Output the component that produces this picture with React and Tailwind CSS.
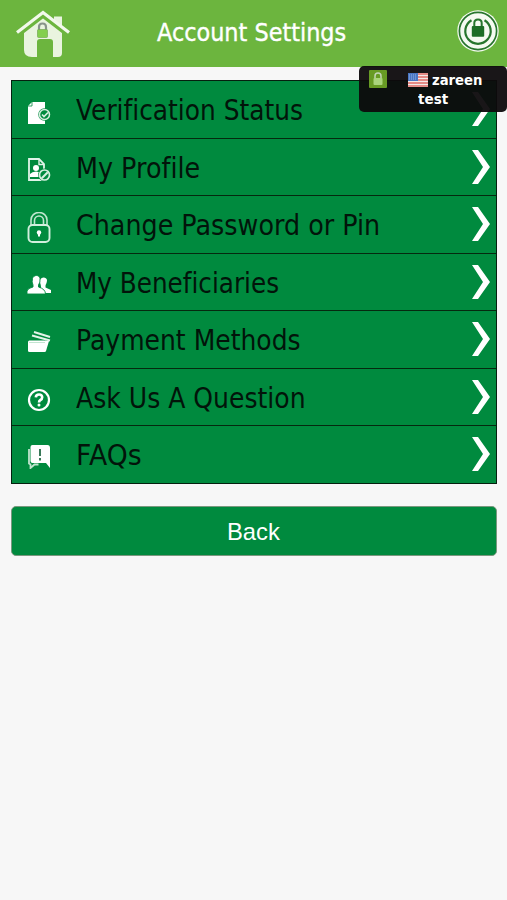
import React from "react";

function HomeIcon() {
  return (
    <svg viewBox="0 0 56 48" className="h-12 w-14 shrink-0">
      <path d="M39 14V6.500h8V20z" fill="#e9f4df" />
      <path d="M9 22 28 7l19 15v21q0 4-4 4h-5V32q0-3-3-3H25q-3 0-3 3v15h-5q-8 0-8-7z" fill="#e9f4df" />
      <path d="M2 26 28 6l26 20" fill="none" stroke="#6cb53e" strokeWidth="4" />
      <path d="M2 22.500 28 2.500l26 20" fill="none" stroke="#f2f9eb" strokeWidth="3.200" />
      <path d="M24 21v-4q0-3.500 3.500-3.500T31 17v4" fill="none" stroke="#88938a" strokeWidth="2.200" />
      <rect x="22.500" y="19.500" width="10" height="8" rx="1" fill="#83cf4d" stroke="#76a954" strokeWidth=".7" />
    </svg>
  );
}

function LockPowerIcon() {
  return (
    <svg viewBox="0 0 42 42" className="h-[42px] w-[42px] shrink-0">
      <circle cx="21" cy="21" r="20.700" fill="#f5faf1" />
      <circle cx="21" cy="21" r="18.600" fill="none" stroke="#27752d" strokeWidth="1.700" />
      <path d="M14.500 10.200a12.700 12.700 0 1 0 13 0" fill="none" stroke="#27752d" strokeWidth="2.200" />
      <path d="M17.300 18v-5q0-3.500 3.700-3.500t3.700 3.500v5" fill="none" stroke="#27752d" strokeWidth="2" />
      <rect x="14.800" y="16" width="12.400" height="10.800" rx="1" fill="#1d6d26" />
    </svg>
  );
}

const icons = {
  verify: (
    <>
      <path d="M5 2h13v22H1V6z" fill="white" />
      <path d="M1 6h4V2" fill="none" stroke="#008a3e" strokeWidth=".8" />
      <circle cx="17.500" cy="14.500" r="6.200" fill="#008a3e" />
      <circle cx="17.500" cy="14.500" r="5" fill="none" stroke="#d6eee0" strokeWidth="1.500" />
      <path d="m15 14.500 2 2 4-4" fill="none" stroke="#d6eee0" strokeWidth="1.700" />
    </>
  ),
  profile: (
    <>
      <path d="M2 2h10l5 5v16H2z" fill="none" stroke="#e0f4e8" strokeWidth="1.800" />
      <path d="M12 2v5.500h5" fill="none" stroke="#e0f4e8" strokeWidth="1.400" />
      <circle cx="9" cy="11" r="3" fill="white" />
      <path d="M3 20v-3q2-2.500 6-2.500t6 2.500v3z" fill="white" />
      <circle cx="17.500" cy="18" r="6.400" fill="#008a3e" />
      <circle cx="17.500" cy="18" r="5" fill="none" stroke="#d5efdf" strokeWidth="1.700" />
      <path d="m14 20.500 6-6 1.500 1.500-6 6z" fill="#d5efdf" />
    </>
  ),
  lock: (
    <>
      <path d="M4 13V8a8 7.500 0 0 1 16 0v5M7.500 13V8.500a4.500 4.500 0 0 1 9 0V13" fill="none" stroke="#bfe6cf" strokeWidth="1.600" />
      <rect x="1.500" y="13" width="21" height="17" rx="4" fill="none" stroke="#d2efdd" strokeWidth="1.900" />
      <circle cx="12" cy="20.500" r="2.200" fill="white" />
      <path d="M12 20v4.500" stroke="white" strokeWidth="2" />
    </>
  ),
  people: (
    <>
      <path d="M14 13c0-3-1.500-4-1-7 1-3.500 6.500-3.500 7 0 0 3-1 3.500-1.500 5.500v2L24 16v3H14z" fill="white" />
      <path d="M0 20v-3q1-3 6-4v-2Q4.500 8 5.500 4.500c1-4 7-4 7.500 0q.5 4-1.500 6.500v2q7 2 7 7z" fill="white" stroke="#008a3e" strokeWidth=".9" />
    </>
  ),
  cards: (
    <>
      <path d="m7 1 16 5M5 4.500l18 5" fill="none" stroke="#e3f4e9" strokeWidth="1.900" />
      <path d="m18 9.500 4 .5-3 10" fill="white" />
      <rect x="1" y="9.500" width="18" height="11.500" rx="1.500" fill="white" />
      <path d="M2 11.500h16" stroke="#b4dec5" strokeWidth=".8" />
    </>
  ),
  question: (
    <>
      <circle cx="12" cy="12" r="10" fill="none" stroke="white" strokeWidth="2.200" />
      <path d="M8.800 9.300q.2-2.800 3.200-2.800t3.200 2.700q0 1.800-1.800 2.800-1.400.8-1.400 2.500" fill="none" stroke="white" strokeWidth="2.600" />
      <circle cx="12" cy="17" r="1.500" fill="white" />
    </>
  ),
  faq: (
    <>
      <path d="M2 4v14.500l1.500 1V23l4-3.500h4" fill="none" stroke="#c0e4ce" strokeWidth="1.800" />
      <path d="M5.500 0H20.500q2.500 0 2.500 3v20l-4-5H5.500q-2 0-2-2V2q0-2 2-2z" fill="white" />
      <path d="M13 4v7M13 13v2.500" stroke="#397958" strokeWidth="2" />
    </>
  ),
};

const rows = [
  { icon: "verify", box: "0 0 24 25", size: "h-[25px]", label: "Verification Status", width: 227 },
  { icon: "profile", box: "0 0 24 25", size: "h-[25px]", label: "My Profile", width: 124 },
  { icon: "lock", box: "0 0 24 31", size: "h-[31px]", label: "Change Password or Pin", width: 304 },
  { icon: "people", box: "0 0 24 21", size: "h-[21px]", label: "My Beneficiaries", width: 203 },
  { icon: "cards", box: "0 0 24 22", size: "h-[22px]", label: "Payment Methods", width: 225 },
  { icon: "question", box: "0 0 24 24", size: "h-6", label: "Ask Us A Question", width: 230 },
  { icon: "faq", box: "0 0 24 24", size: "h-6", label: "FAQs", width: 66 },
];

// Scales a single-line label horizontally to its allotted width.
function FitText({ width, children, className }) {
  const ref = React.useRef(null);
  const [scale, setScale] = React.useState(1);
  React.useLayoutEffect(() => {
    const fit = () => setScale(width / ref.current.offsetWidth);
    fit();
    document.fonts.ready.then(fit);
  }, [width]);
  return (
    <span ref={ref} className={"inline-block origin-left whitespace-nowrap " + className} style={{ transform: `scaleX(${scale})` }}>
      {children}
    </span>
  );
}

function UsFlag() {
  return (
    <svg viewBox="0 0 20 14" className="h-[14px] w-5 shrink-0">
      <rect width="20" height="14" fill="#f4e9e8" />
      <path d="M0 1h20M0 4h20M0 7h20M0 10h20M0 13h20" stroke="#df6c66" strokeWidth="1.400" />
      <rect width="10" height="8" fill="#4976c4" />
      <path d="M1 2h8M1 4h8M1 6h8" stroke="#a8c2ec" strokeWidth=".8" strokeDasharray="1 1" />
    </svg>
  );
}

export default function App() {
  return (
    <div className="relative h-[900px] w-[507px] overflow-hidden bg-[#f7f7f7] font-['DejaVu_Sans',sans-serif] [font-variant-ligatures:none]">
      <header className="flex h-[67px] items-start justify-between bg-[#6cb53e] pl-[15px] pr-2 pt-[10px]">
        <HomeIcon />
        <h1 className="ml-[86px] w-[189px] text-[24.5px] leading-[46px] text-white">
          <FitText width={189} className="[-webkit-text-stroke:0.4px_#ffffff]">Account Settings</FitText>
        </h1>
        <div className="ml-auto">
          <LockPowerIcon />
        </div>
      </header>

      <main className="px-[10.5px] pt-[13px]">
        <nav className="flex h-[403.500px] flex-col border-[1.5px] border-[#05200f] bg-[#008a3e]">
          {rows.map((row, i) => (
            <a key={row.label} className={"flex min-h-0 flex-1 items-center " + (i ? "border-t-[1.5px] border-[#05290f]" : "")}>
              <svg viewBox={row.box} className={"ml-[15px] mt-1.5 w-6 shrink-0 " + row.size}>
                {icons[row.icon]}
              </svg>
              <span className="ml-[25px] flex-1 pt-[2px] text-[27.5px] leading-[56px] text-[#02140a]">
                <FitText width={row.width} className="">{row.label}</FitText>
              </span>
              <svg viewBox="0 0 18 34" className="mr-[6px] h-[34px] w-[18px] shrink-0">
                <path d="M0 0h6l12 17L6 34H0l11-17z" fill="white" />
              </svg>
            </a>
          ))}
        </nav>
        <button className="mt-[22.500px] flex h-[50px] w-full items-center justify-center rounded-[5px] border border-[#7b987f] bg-[#008a3e] pl-px pt-px font-['Liberation_Sans',Arial,sans-serif] text-2xl text-white">
          <FitText width={52.5} className="">Back</FitText>
        </button>
      </main>

      <div className="absolute left-[359px] top-[66px] flex h-[46px] w-[148px] rounded-[5px] bg-[#0d0a0c]/95 pl-[10px] pt-[4px] text-[14px] font-bold leading-[20px] text-white">
        <svg viewBox="0 0 18 18" className="h-[18px] w-[18px] shrink-0">
          <rect width="18" height="18" rx="1" fill="#689b24" />
          <path d="M6 9V6q0-3 3-3t3 3v3" fill="none" stroke="#c4d4b8" strokeWidth="1.500" />
          <rect x="4.500" y="8" width="9" height="7" rx="1" fill="#abd57c" />
        </svg>
        <div className="ml-[21px] flex w-[74px] flex-col">
          <div className="flex h-[19px] items-center gap-1">
            <UsFlag />
            <FitText width={50} className="">zareen</FitText>
          </div>
          <div className="pl-[10px]">
            <FitText width={30} className="">test</FitText>
          </div>
        </div>
      </div>
    </div>
  );
}
